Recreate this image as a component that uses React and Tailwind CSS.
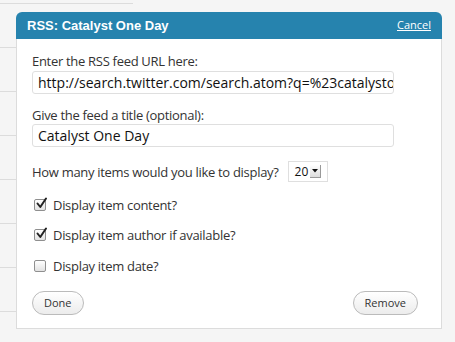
import React from "react";

const font = { fontFamily: '"Open Sans", "Liberation Sans", sans-serif' };

function Check({ checked }) {
  return (
    <span className="w-[12px] h-[12px] rounded-[2px] border border-[#8f8f8f] bg-gradient-to-b from-[#ffffff] to-[#e2e2e2] relative shrink-0">
      {checked && (
        <svg className="absolute left-[0px] top-[-3px]" width="13" height="13" viewBox="0 0 13 13">
          <path d="M2.5 6.5 L5.3 10 L11 1.5" fill="none" stroke="#222" strokeWidth="2" strokeLinecap="round" strokeLinejoin="round" />
        </svg>
      )}
    </span>
  );
}

export default function App() {
  return (
    <div className="w-[455px] h-[342px] bg-[#f5f5f5] overflow-hidden flex flex-col text-[#333]" style={font}>
      <div className="h-[4px] w-[133px] border-b border-[#dcdcdc] shrink-0" />
      <div className="flex">
        <div className="w-[16px] flex flex-col shrink-0">
          {[0, 1, 2, 3, 4, 5, 6].map((i) => (
            <div key={i} className="h-[44px] border-b border-[#dcdcdc]" />
          ))}
        </div>
        <div className="w-[426px] mt-[8px] flex flex-col self-start">
          <div className="h-[27px] bg-[#2683ae] rounded-t-[6px] flex items-center justify-between pl-[11px] pr-[11px]">
            <span className="text-white font-bold text-[13px]" style={{ fontFamily: '"Liberation Sans", Arial, sans-serif' }}>RSS: Catalyst One Day</span>
            <span className="text-white text-[11px] underline">Cancel</span>
          </div>
          <div className="bg-white border-x border-b border-[#dcdcdc] h-[290px] pl-[15px] pr-[23px] flex flex-col text-[13px] tracking-[-0.3px]">
            <div className="mt-[14px] leading-[16px]">Enter the RSS feed URL here:</div>
            <div className="mt-[2px] w-[362px] h-[23px] border border-[#dfdfdf] rounded-[3px] pl-[5px] flex items-center overflow-hidden whitespace-nowrap text-[#111] text-[14px] tracking-normal">
              http://search.twitter.com/search.atom?q=%23catalystone
            </div>
            <div className="mt-[13px] leading-[16px]">Give the feed a title (optional):</div>
            <div className="mt-[1px] w-[362px] h-[23px] border border-[#dfdfdf] rounded-[3px] pl-[5px] flex items-center text-[#111] text-[14px] tracking-normal">
              Catalyst One Day
            </div>
            <div className="mt-[14px] flex items-center gap-[9px]">
              <span className="leading-[16px]">How many items would you like to display?</span>
              <span className="h-[21px] w-[40px] border border-[#dfdfdf] flex items-center pl-[6px] gap-[2px] text-[#111] tracking-normal">
                <span className="text-[12px]">20</span>
                <span className="w-[11px] h-[13px] bg-gradient-to-b from-[#ffffff] to-[#dcdcdc] border-r border-b border-[#999] flex items-center justify-center">
                  <svg width="6" height="4" viewBox="0 0 6 4"><path d="M0 0 H6 L3 3.5 Z" fill="#111" /></svg>
                </span>
              </span>
            </div>
            <div className="mt-[15px] flex items-center gap-[7px] pl-[2px] leading-[16px]">
              <Check checked />
              <span>Display item content?</span>
            </div>
            <div className="mt-[14px] flex items-center gap-[7px] pl-[2px] leading-[16px]">
              <Check checked />
              <span>Display item author if available?</span>
            </div>
            <div className="mt-[15px] flex items-center gap-[7px] pl-[2px] leading-[16px]">
              <Check />
              <span>Display item date?</span>
            </div>
            <div className="mt-[17px] flex justify-between text-[11px] tracking-normal">
              <span className="h-[24px] px-[11px] rounded-full border border-[#bbb] bg-gradient-to-b from-[#ffffff] to-[#ececec] flex items-center">Done</span>
              <span className="h-[24px] px-[11px] rounded-full border border-[#bbb] bg-gradient-to-b from-[#ffffff] to-[#ececec] flex items-center">Remove</span>
            </div>
          </div>
        </div>
      </div>
    </div>
  );
}
